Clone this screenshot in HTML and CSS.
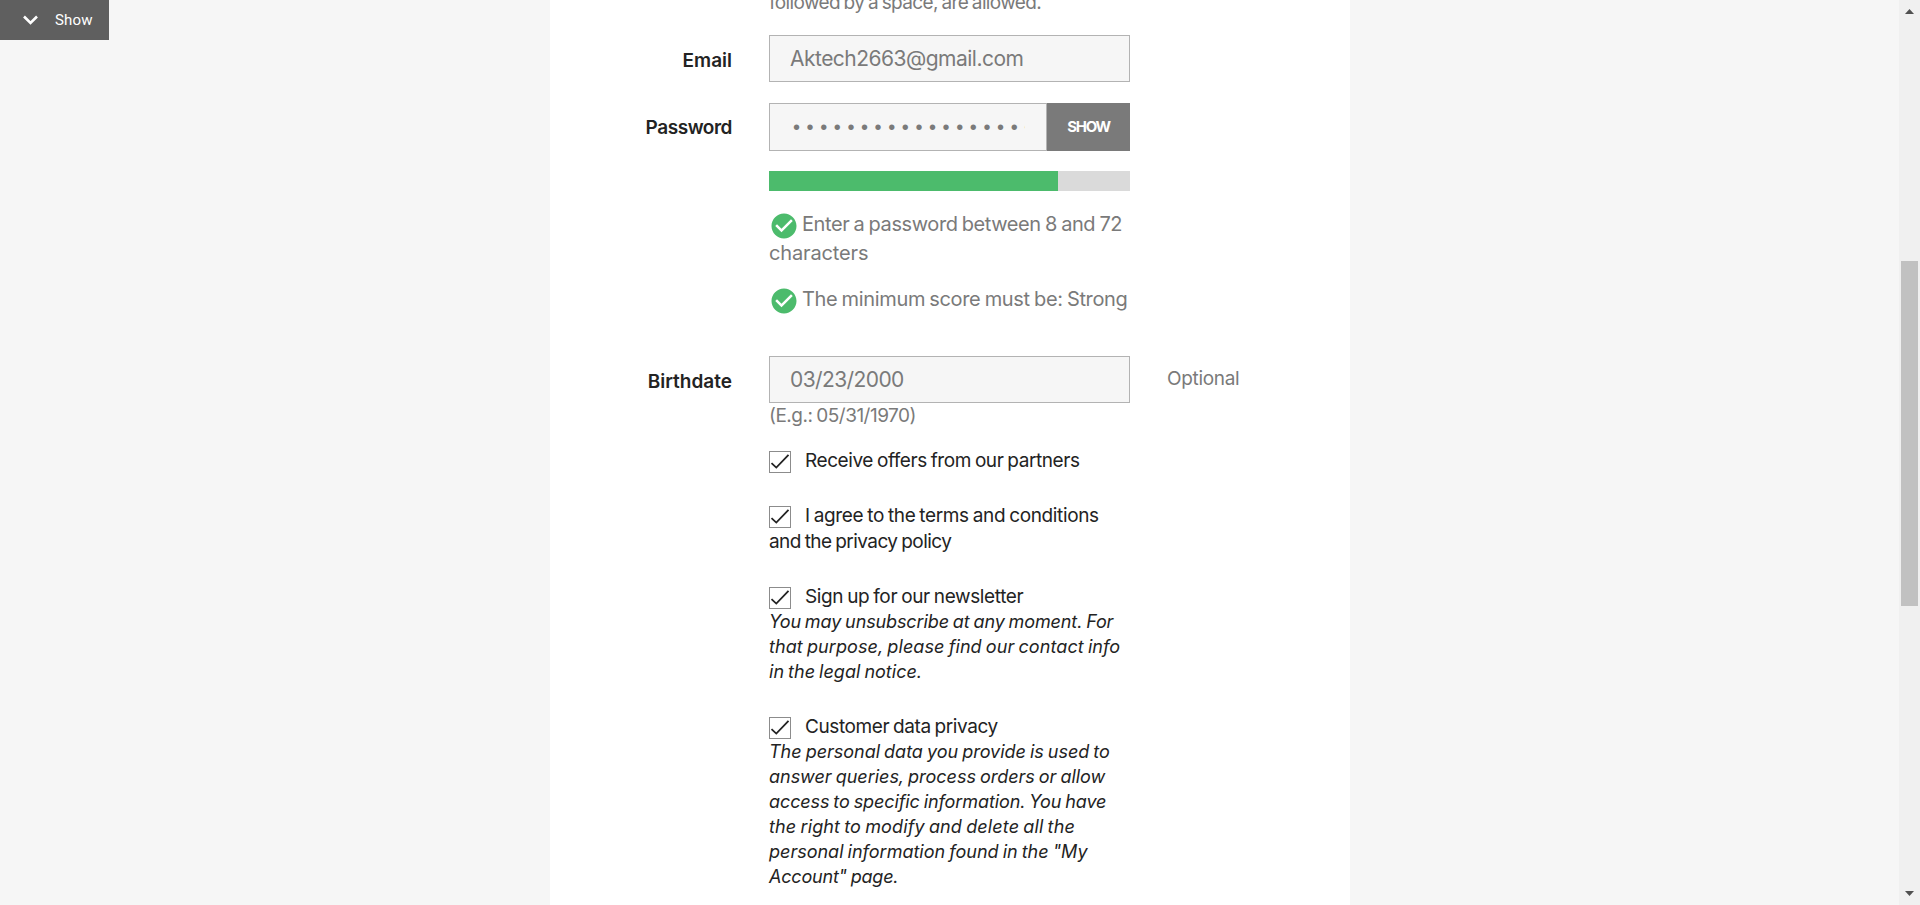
FILE: index.html
```html
<!DOCTYPE html>
<html lang="en">
<head>
<meta charset="utf-8">
<title>Create an account</title>
<link rel="stylesheet" href="styles.css">
</head>
<body>
<svg class="defs" width="0" height="0">
  <symbol id="tick" viewBox="0 0 20 20"><path d="M1.500 11.200 6.300 15.600 18.500 2.800" fill="none" stroke="#232323" stroke-width="1.800"/></symbol>
  <symbol id="ok" viewBox="0 0 24 24"><path fill="#4cbb6c" d="M12 2C6.480 2 2 6.480 2 12s4.480 10 10 10 10-4.480 10-10S17.520 2 12 2zm-2 15l-5-5 1.410-1.410L10 14.170l7.590-7.590L19 8l-9 9z"/></symbol>
</svg>
<main class="page">
  <form class="card">
    <div class="row row-name">
      <div class="field"><span class="line comment l-allowed">followed by a space, are allowed.</span></div>
    </div>
    <div class="row row-email">
      <label class="label">Email</label>
      <div class="field"><div class="input l-email">Aktech2663@gmail.com</div></div>
    </div>
    <div class="row row-password">
      <label class="label l-password">Password</label>
      <div class="field">
        <div class="group">
          <div class="input secret"><span class="dots">••••••••••••••••••</span></div>
          <button type="button" class="reveal">SHOW</button>
        </div>
        <div class="meter"><div class="meter-fill"></div></div>
        <div class="hint">
          <div class="hint-line"><svg class="ok"><use href="#ok"/></svg><span class="line l-enter">Enter a password between 8 and 72</span></div>
          <span class="line l-char">characters</span>
        </div>
        <div class="hint">
          <div class="hint-line"><svg class="ok"><use href="#ok"/></svg><span class="line l-min">The minimum score must be: Strong</span></div>
        </div>
      </div>
    </div>
    <div class="row row-birth">
      <label class="label">Birthdate</label>
      <div class="field">
        <div class="input l-date">03/23/2000</div>
        <span class="line comment l-eg">(E.g.: 05/31/1970)</span>
      </div>
      <div class="optional">Optional</div>
    </div>
    <div class="row row-checks">
      <div class="field checks">
        <div class="check">
          <div class="check-line"><span class="box"><svg><use href="#tick"/></svg></span><span class="line l-offers">Receive offers from our partners</span></div>
        </div>
        <div class="check">
          <div class="check-line"><span class="box"><svg><use href="#tick"/></svg></span><span class="line l-agree">I agree to the terms and conditions</span></div>
          <span class="line l-privacy">and the privacy policy</span>
        </div>
        <div class="check">
          <div class="check-line"><span class="box"><svg><use href="#tick"/></svg></span><span class="line l-news">Sign up for our newsletter</span></div>
          <em class="note">
            <span class="line n1">You may unsubscribe at any moment. For</span>
            <span class="line n2">that purpose, please find our contact info</span>
            <span class="line n3">in the legal notice.</span>
          </em>
        </div>
        <div class="check">
          <div class="check-line"><span class="box"><svg><use href="#tick"/></svg></span><span class="line l-data">Customer data privacy</span></div>
          <em class="note">
            <span class="line n4">The personal data you provide is used to</span>
            <span class="line n5">answer queries, process orders or allow</span>
            <span class="line n6">access to specific information. You have</span>
            <span class="line n7">the right to modify and delete all the</span>
            <span class="line n8">personal information found in the "My</span>
            <span class="line n9">Account" page.</span>
          </em>
        </div>
      </div>
    </div>
  </form>
</main>
<aside class="scrollbar">
  <svg class="arrow" viewBox="0 0 9 5"><path d="M4.500 0 9 5H0z"/></svg>
  <div class="thumb"></div>
  <svg class="arrow" viewBox="0 0 9 5"><path d="M0 0h9L4.500 5z"/></svg>
</aside>
<div class="toggle">
  <svg class="chevron" viewBox="0 0 15 10"><path d="M1 1.500 7.500 8 14 1.500" fill="none" stroke="#fff" stroke-width="2.600"/></svg>
  <span>Show</span>
</div>
</body>
</html>
```
FILE: styles.css
```css
* { box-sizing: border-box; }

html, body { height: 100%; }

body {
  margin: 0;
  display: flex;
  overflow: hidden;
  background: #f6f6f6;
  color: #232323;
  font-family: Inter, "Open Sans", sans-serif;
}

.defs { position: absolute; }

/* Page and form card */
.page {
  flex: 1;
  height: 905px;
  overflow: hidden;
  padding-left: 550px;
}

.card {
  display: flow-root;
  width: 800px;
  height: 905px;
  background: #fff;
}

.row {
  display: grid;
  grid-template-columns: 182px 361px 1fr;
  column-gap: 37px;
}

.field { grid-column: 2; }

.line {
  display: block;
  white-space: nowrap;
}

.label {
  text-align: right;
  font-size: 19px;
  font-weight: 600;
  line-height: 24px;
}

.comment {
  color: #7a7a7a;
  font-size: 19px;
  line-height: 26px;
  word-spacing: -1px;
}

.input {
  height: 47px;
  padding-left: 20px;
  border: 1px solid #b3b3b3;
  background: #f6f6f6;
  color: #7a7a7a;
  font-size: 21px;
  line-height: 45px;
}

.row-name { margin-top: -10px; }
.row-email { margin-top: 19px; }
.row-email .label { padding-top: 14px; }
.row-password { margin-top: 21px; }
.row-password .label { padding-top: 13px; }
.row-birth { margin-top: 43px; }
.row-birth .label { padding-top: 14px; }
.row-checks { margin-top: 18px; }

/* Password */
.group { display: flex; height: 48px; }

.secret {
  width: 278px;
  height: 48px;
}

.dots {
  display: block;
  width: 235px;
  overflow: hidden;
  white-space: nowrap;
  font: 20px/46px "Liberation Sans", sans-serif;
  padding-left: 3px;
  letter-spacing: 6.6px;
}

.reveal {
  width: 83px;
  padding: 0 0 2px;
  border: 0;
  background: #7a7a7a;
  color: #fff;
  font: 700 15px Inter, sans-serif;
  letter-spacing: -1.3px;
}

.meter {
  height: 20px;
  margin: 20px 0 19px;
  background: #dadada;
}

.meter-fill {
  width: 80%;
  height: 100%;
  background: #4cbb6c;
}

.hint {
  color: #7a7a7a;
  font-size: 20px;
  line-height: 29px;
  word-spacing: -1px;
}

.hint + .hint { margin-top: 17px; }
.hint:last-child { margin-bottom: -1px; }

.hint-line {
  display: flex;
  height: 29px;
}

.ok {
  flex: none;
  width: 30px;
  height: 30px;
  margin: 1px 3px 0 0;
}

.optional {
  padding: 11px 0 0;
  color: #7a7a7a;
  font-size: 19px;
  line-height: 24px;
  letter-spacing: -0.32px;
}

/* Checkboxes */
.checks {
  display: flex;
  flex-direction: column;
  gap: 29px;
}

.check {
  font-size: 19px;
  line-height: 26px;
  word-spacing: -1px;
}

.check > .line { padding-top: 1px; margin-bottom: -1px; }

.check-line {
  display: flex;
  gap: 14px;
  height: 26px;
}

.check-line .line { padding-top: 1px; }

.box {
  display: flex;
  width: 22px;
  height: 22px;
  margin-top: 4px;
  border: 1px solid #8c8c8c;
}

.box svg { width: 20px; height: 20px; }

.note {
  display: block;
  font-size: 18px;
  line-height: 25px;
  word-spacing: -1px;
}

/* Tracking per line */
.l-allowed { letter-spacing: -0.64px; }
.l-email { letter-spacing: -0.517px; }
.l-password { letter-spacing: -0.46px; }
.l-enter { letter-spacing: -0.41px; }
.l-char { letter-spacing: -0.134px; }
.l-min { letter-spacing: -0.35px; }
.l-date { letter-spacing: -0.6px; }
.l-eg { letter-spacing: -0.5px; }
.l-offers { letter-spacing: -0.42px; }
.l-agree { letter-spacing: -0.36px; }
.l-privacy { letter-spacing: -0.56px; }
.l-news { letter-spacing: -0.37px; }
.l-data { letter-spacing: -0.415px; }
.n1 { letter-spacing: -0.12px; }
.n2 { letter-spacing: 0.08px; }
.n3 { letter-spacing: 0.01px; }
.n4 { letter-spacing: -0.015px; }
.n5 { letter-spacing: -0.02px; }
.n6 { letter-spacing: -0.1px; }
.n7 { letter-spacing: 0.12px; }
.n8 { letter-spacing: 0; }
.n9 { letter-spacing: -0.2px; }

/* Scrollbar */
.scrollbar {
  display: flex;
  flex-direction: column;
  width: 21px;
  height: 905px;
  padding: 9px 0 9px 2px;
  background: #f0f0f0;
}

.arrow {
  width: 9px;
  height: 5px;
  margin-left: 4px;
  fill: #505050;
}

.thumb {
  width: 17px;
  height: 345px;
  margin: 247px 0 auto;
  background: #c1c1c1;
}

/* Floating toggle over the page corner */
.toggle {
  position: absolute;
  top: 0;
  left: 0;
  display: flex;
  align-items: center;
  gap: 17px;
  width: 109px;
  height: 40px;
  padding-left: 23px;
  background: #5f5f5f;
  color: #fff;
  font: 15px Roboto, sans-serif;
  letter-spacing: 0.2px;
}

.chevron { width: 15px; height: 10px; }
```
